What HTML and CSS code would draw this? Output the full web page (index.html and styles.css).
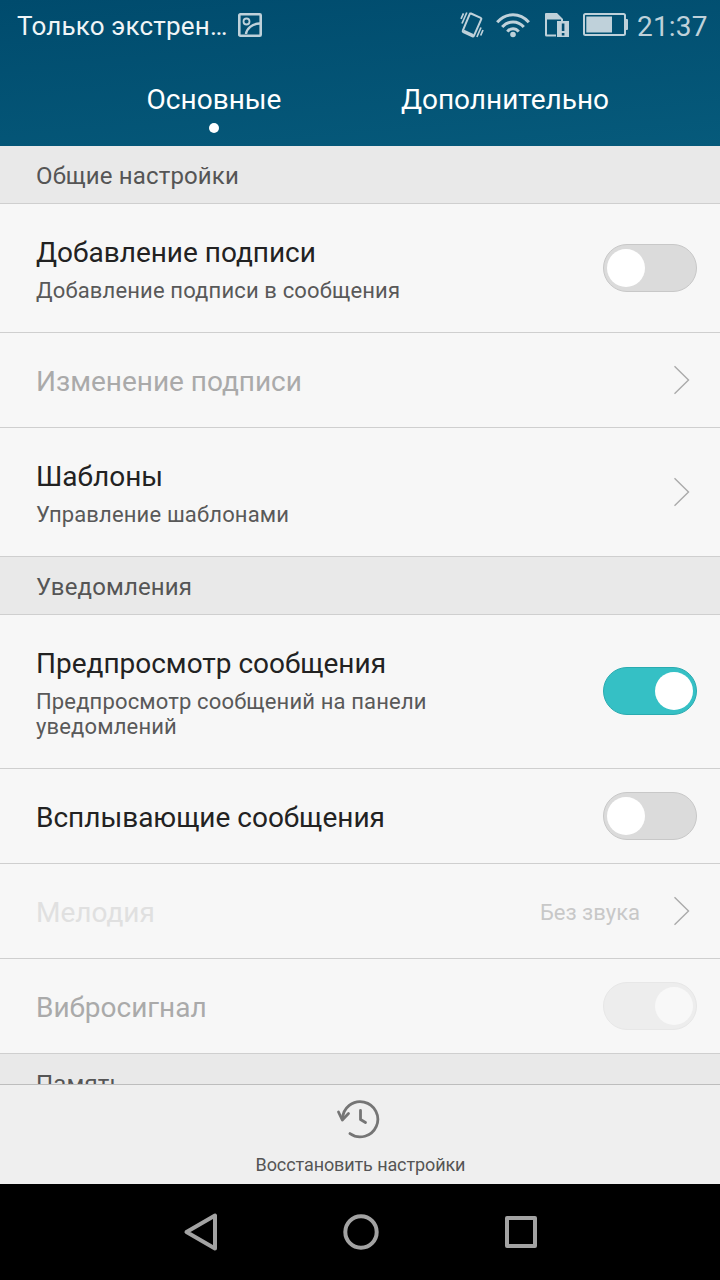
FILE: index.html
```html
<!DOCTYPE html>
<html lang="ru">
<head>
<meta charset="utf-8">
<title>Настройки сообщений</title>
<link rel="stylesheet" href="styles.css">
</head>
<body>
<div class="screen">
  <header class="header">
    <div class="status">
      <span class="carrier">Только экстрен…</span>
      <svg class="ic-picture" width="24" height="24" viewBox="0 0 24 24" fill="none" stroke="#bfd1da"><rect x="1.300" y="1.300" width="21.400" height="21.400" rx="1" stroke-width="2.600"/><circle cx="8.500" cy="8.500" r="3" stroke-width="1.800"/><path d="M8 21C8.500 16 14 10.500 22 10.500" stroke-width="2.400"/></svg>
      <span class="spacer"></span>
      <svg class="ic-vibrate" width="24" height="28" viewBox="0 0 24 28" fill="none" stroke="#bfd1da"><path d="M11 2.500L20.700 6.800Q21.700 7.300 21.300 8.200L13.900 24.800Q13.400 25.800 12.400 25.400L3.300 21.100Q2.400 20.600 2.800 19.700L9.700 3.200Q10.100 2.100 11 2.500Z" stroke-width="2"/><path d="M3.600 20L13.300 24.500" stroke-width="3"/><path d="M6.800 1.500L2 12.500M3.500 2.300L1 7.800M16.900 26L21 16.500M20.700 24.500L23 19" stroke-width="1.700"/></svg>
      <svg class="ic-wifi" width="34" height="26" viewBox="0 0 34 26" fill="none" stroke="#bfd1da" stroke-width="3"><path d="M1.200 10.200C10 .2 24 .2 32.800 10.200M6.200 15C12 8.200 22 8.200 27.800 15M11.300 19.600C14.500 15.800 19.500 15.800 22.700 19.600"/><circle cx="17" cy="22.500" r="2.800" fill="#bfd1da" stroke="none"/></svg>
      <svg class="ic-sim" width="25" height="25" viewBox="0 0 25 25"><path d="M0 1Q0 0 1 0H12L18 6V8H16V6.500H2V21.500H11V23.500H1.500Q0 23.500 0 22Z" fill="#bfd1da"/><path d="M12 8H24V24H12Z" fill="#bfd1da"/><path d="M16.800 10.500H19.400V18H16.800ZM16.800 20H19.400V22.500H16.800Z" fill="#034d70"/></svg>
      <svg class="ic-battery" width="46" height="24" viewBox="0 0 46 24"><rect x="1" y="1" width="41" height="21" rx="1.500" fill="none" stroke="#bfd1da" stroke-width="2"/><path d="M3.300 3.500H29V19.500H3.300ZM42.500 6H44Q45 6 45 7V16Q45 17 44 17H42.500Z" fill="#bfd1da"/></svg>
      <span class="clock">21:37</span>
    </div>
    <nav class="tabs">
      <div class="tab tab-active"><span>Основные</span><i class="dot"></i></div>
      <div class="tab"><span>Дополнительно</span></div>
    </nav>
  </header>
  <main class="list">
    <h2 class="section">Общие настройки</h2>
    <div class="row row-two">
      <div class="text"><div class="title">Добавление подписи</div><div class="sub">Добавление подписи в сообщения</div></div>
      <div class="switch"><i class="knob"></i></div>
    </div>
    <div class="row">
      <div class="text"><div class="title disabled">Изменение подписи</div></div>
      <svg class="chevron" width="17" height="30" viewBox="0 0 17 30"><path d="M1.500 1.300L15.500 15L1.500 28.700"/></svg>
    </div>
    <div class="row row-two">
      <div class="text"><div class="title">Шаблоны</div><div class="sub">Управление шаблонами</div></div>
      <svg class="chevron" width="17" height="30" viewBox="0 0 17 30"><path d="M1.500 1.300L15.500 15L1.500 28.700"/></svg>
    </div>
    <h2 class="section">Уведомления</h2>
    <div class="row row-three">
      <div class="text"><div class="title">Предпросмотр сообщения</div><div class="sub">Предпросмотр сообщений на панели уведомлений</div></div>
      <div class="switch switch-on"><i class="knob"></i></div>
    </div>
    <div class="row">
      <div class="text"><div class="title">Всплывающие сообщения</div></div>
      <div class="switch"><i class="knob"></i></div>
    </div>
    <div class="row">
      <div class="text"><div class="title faint">Мелодия</div></div>
      <span class="value">Без звука</span>
      <svg class="chevron" width="17" height="30" viewBox="0 0 17 30"><path d="M1.500 1.300L15.500 15L1.500 28.700"/></svg>
    </div>
    <div class="row">
      <div class="text"><div class="title disabled">Вибросигнал</div></div>
      <div class="switch switch-off-disabled"><i class="knob"></i></div>
    </div>
    <h2 class="section">Память</h2>
  </main>
  <footer class="action">
    <svg class="ic-restore" width="44" height="40" viewBox="0 0 44 40" fill="none" stroke="#757575" stroke-width="2.800" stroke-linecap="round" stroke-linejoin="round"><path d="M14 34.600A17.600 17.600 0 1 0 6.600 20"/><path d="M2.500 13L6.300 21L12.500 14.500"/><path d="M24.500 11.500V20.500L29.500 23.500"/></svg>
    <span class="action-label">Восстановить настройки</span>
  </footer>
  <nav class="navbar">
    <svg width="40" height="40" viewBox="0 0 40 40"><path d="M34 3.500V36.500L5.500 20Z"/></svg>
    <svg width="40" height="40" viewBox="0 0 40 40"><circle cx="20" cy="20" r="15.700"/></svg>
    <svg width="40" height="40" viewBox="0 0 40 40"><rect x="6" y="6" width="28" height="28"/></svg>
  </nav>
</div>
</body>
</html>
```
FILE: styles.css
```css
* { box-sizing: border-box; }
body { margin: 0; font-family: Roboto, "Noto Sans", sans-serif; background: #000; }
.screen { width: 720px; height: 1280px; display: flex; flex-direction: column; overflow: hidden; }
.header { height: 146px; flex: none; background: linear-gradient(175deg, #004b6d, #065a7b); color: #fff; }
.status { height: 50px; display: flex; align-items: center; padding: 0 12px 0 17px; color: #bfd1da; }
.status svg { flex: none; }
.carrier { font-size: 26px; line-height: 32px; letter-spacing: .18px; color: #f0f5f7; width: 221px; white-space: nowrap; margin-top: 1px; }
.spacer { flex: 1; }
.ic-vibrate { margin-right: 12px; }
.ic-wifi { margin-right: 15px; }
.ic-sim { margin-right: 13px; }
.ic-battery { margin-right: 8px; }
.clock { font-size: 28px; line-height: 34px; letter-spacing: .2px; width: 71px; white-space: nowrap; margin-top: 3px; }
.tabs { display: grid; grid-template-columns: 291px 291px; justify-content: center; font-size: 28px; line-height: 34px; padding: 33px 1px 0 0; }
.tab { display: flex; flex-direction: column; align-items: center; white-space: nowrap; }
.dot { width: 10px; height: 10px; border-radius: 50%; background: #fff; margin-top: 6px; }
.list { height: 938px; flex: none; overflow: hidden; background: #f7f7f7; }
.section { margin: 0; height: 58px; padding: 2px 36px 0; background: #e9e9e9; border-bottom: 1px solid #cfcfcf; font-size: 24px; font-weight: 400; line-height: 57px; letter-spacing: .14px; color: #555; }
.row { height: 95px; display: flex; align-items: center; padding: 0 23px 0 36px; border-bottom: 1px solid #cfcfcf; }
.row-two { height: 129px; }
.row-three { height: 154px; padding-bottom: 2px; }
.text { flex: 1; padding-top: 4px; }
.row-two .text { padding-top: 3px; }
.row-three .text { padding-top: 5px; }
.title { font-size: 28px; line-height: 34px; letter-spacing: -.01px; color: #222; }
.sub { font-size: 22px; line-height: 25px; letter-spacing: .15px; color: #595959; margin-top: 8px; max-width: 430px; }
.disabled { color: #aaa; }
.faint { color: #e0e0e0; }
.value { font-size: 22px; color: #c8c8c8; margin-right: 33px; padding-top: 2px; }
.chevron { margin-right: 7px; fill: none; stroke: #aaa; stroke-width: 1.400; }
.switch { width: 94px; height: 48px; border-radius: 24px; background: #dbdbdb; border: 1px solid #c8c8c8; padding: 4px 3px; display: flex; }
.knob { width: 38px; height: 38px; border-radius: 50%; background: #fff; }
.switch-on { background: #35c0c5; border-color: #2aabb0; justify-content: flex-end; }
.switch-off-disabled { background: #ededed; border-color: #e7e7e7; justify-content: flex-end; }
.switch-off-disabled .knob { background: #f8f8f8; }
.action { height: 100px; flex: none; background: #efefef; border-top: 1px solid #bdbdbd; display: flex; flex-direction: column; align-items: center; padding-top: 14px; }
.ic-restore { margin-right: 4px; }
.action-label { font-size: 18px; line-height: 22px; letter-spacing: -.1px; color: #555; margin-top: 15px; padding-left: 1px; }
.navbar { height: 96px; flex: none; background: #000; display: flex; justify-content: center; align-items: center; gap: 120px; padding-left: 2px; }
.navbar svg { fill: none; stroke: #a3a3a3; stroke-width: 4; stroke-linejoin: round; }
```
